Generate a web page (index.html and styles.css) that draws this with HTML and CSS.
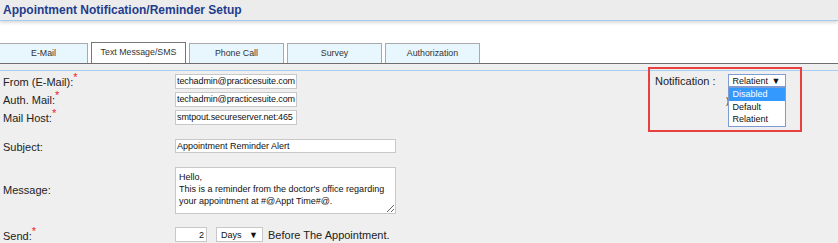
FILE: index.html
```html
<!DOCTYPE html>
<html lang="en">

<head>
    <meta charset="UTF-8">
    <title>Appointment Notification/Reminder Setup</title>
    <link rel="stylesheet" href="styles.css">
</head>

<body>
    <div class="header">
        <h1>Appointment Notification/Reminder Setup</h1>
    </div>

    <div class="tabs">
        <div class="tab first">E-Mail</div>
        <div class="tab active">Text Message/SMS</div>
        <div class="tab">Phone Call</div>
        <div class="tab">Survey</div>
        <div class="tab">Authorization</div>
    </div>

    <div class="content">
        <div class="row">
            <label>From (E-Mail):<sup>*</sup></label>
            <input type="text" class="short" value="techadmin@practicesuite.com">
        </div>
        <div class="row">
            <label>Auth. Mail:<sup>*</sup></label>
            <input type="text" class="short" value="techadmin@practicesuite.com">
        </div>
        <div class="row">
            <label>Mail Host:<sup>*</sup></label>
            <input type="text" class="short" value="smtpout.secureserver.net:465">
        </div>
        <div class="row subject-row">
            <label>Subject:</label>
            <input type="text" class="wide" value="Appointment Reminder Alert">
        </div>
        <div class="row message-row">
            <label>Message:</label>
            <textarea>Hello,
This is a reminder from the doctor's office regarding your appointment at #@Appt Time#@.</textarea>
        </div>
        <div class="row send-row">
            <label>Send:<sup>*</sup></label>
            <input type="text" class="num" value="2">
            <div class="fake-select days"><span>Days</span><span class="arrow">▼</span></div>
            <span class="after">Before The Appointment.</span>
        </div>

        <div class="notify">
            <span class="notify-label">Notification :</span>
            <div class="notify-select">
                <div class="fake-select open"><span>Relatient</span><span class="arrow">▼</span></div>
                <ul class="options">
                    <li class="selected">Disabled</li>
                    <li>Default</li>
                    <li>Relatient</li>
                </ul>
            </div>
            <span class="hidden-bit">)</span>
        </div>
    </div>
</body>

</html>
```

FILE: styles.css
```css
* {
    margin: 0;
    padding: 0;
    box-sizing: border-box;
}

body {
    font-family: 'Liberation Sans', Arial, sans-serif;
    background-color: #efefef;
    color: #222;
    width: 838px;
    height: 243px;
    overflow: hidden;
}

.header {
    height: 21px;
    padding: 2px 3px 0;
    background-color: #ececec;
    border-bottom: 1px solid #a3cbf2;
    box-shadow: 0 2px 3px rgba(0, 0, 0, 0.14);
    position: relative;
}

.header h1 {
    font-size: 12px;
    line-height: 16px;
    color: #1f3c8c;
}

.tabs {
    display: flex;
    gap: 3px;
    height: 43px;
    padding-top: 22px;
    background-color: #fff;
    border-bottom: 1px solid #6e6e6e;
}

.tab {
    width: 95px;
    height: 20px;
    background-color: #e8f6fe;
    border: 1px solid #a9a9a9;
    border-bottom: none;
    font-size: 8.8px;
    line-height: 19px;
    text-align: center;
    color: #333;
}

.tab.first {
    width: 88px;
    border-left: none;
}

.tab.active {
    height: 21px;
    margin-top: -1px;
    background-color: #fff;
    border-color: #777;
}

.content {
    position: relative;
    margin-top: 6px;
    border-top: 1px solid #a8cdf3;
    padding-top: 1px;
    height: 180px;
}

.row {
    display: flex;
    align-items: center;
    height: 18px;
}

.row label {
    width: 175px;
    padding-left: 3px;
    font-size: 11px;
    padding-top: 2px;
}

.row sup {
    color: #f0202a;
    font-size: 11px;
    line-height: 0;
    vertical-align: 5px;
}

input,
textarea {
    font-family: 'Liberation Sans', Arial, sans-serif;
    font-size: 9px;
    color: #111;
    border: 1px solid #c8c8c8;
    background-color: #fff;
    outline: none;
}

input {
    height: 15px;
    padding: 0 1px;
}

input.short {
    width: 122px;
    padding: 0 0 0 1px;
    letter-spacing: -0.1px;
}

input.wide {
    width: 221px;
    height: 14px;
}

.subject-row {
    height: 20px;
    margin-top: 10px;
}

.message-row {
    height: 64px;
    margin-top: 2px;
}

.message-row label {
    padding-top: 0;
}

textarea {
    width: 221px;
    height: 47px;
    padding: 3px 3px;
    line-height: 12px;
    resize: both;
}

.send-row {
    height: 25px;
}

input.num {
    width: 32px;
    text-align: right;
    padding-right: 2px;
}

.fake-select {
    display: flex;
    align-items: center;
    justify-content: space-between;
    background-color: #fff;
    border: 1px solid #c8c8c8;
    font-size: 9px;
    color: #111;
}

.fake-select .arrow {
    font-size: 9px;
}

.days {
    width: 47px;
    height: 15px;
    margin-left: 9px;
    padding: 0 4px;
}

.after {
    margin-left: 5px;
    font-size: 11px;
}

.notify {
    position: absolute;
    left: 648px;
    top: -4px;
    width: 154px;
    height: 65px;
    border: 2px solid #e8403f;
    display: flex;
    align-items: flex-start;
    gap: 12px;
    padding-left: 5px;
}

.notify-label {
    font-size: 11px;
    margin-top: 6px;
}

.notify-select {
    position: relative;
    margin-top: 5px;
}

.fake-select.open {
    width: 58px;
    height: 13px;
    border-color: #7e9dd2;
    padding: 0 4px;
}

.options {
    position: absolute;
    top: 13px;
    left: 0;
    width: 58px;
    list-style: none;
    background-color: #fff;
    border: 1px solid #7c9bd1;
    font-size: 9px;
    color: #111;
    z-index: 2;
}

.options li {
    height: 12.7px;
    line-height: 12.7px;
    padding-left: 4px;
}

.options li.selected {
    background-color: #3399ff;
    color: #fff;
}

.hidden-bit {
    position: absolute;
    left: 76px;
    top: 27px;
    font-size: 9px;
}
```
